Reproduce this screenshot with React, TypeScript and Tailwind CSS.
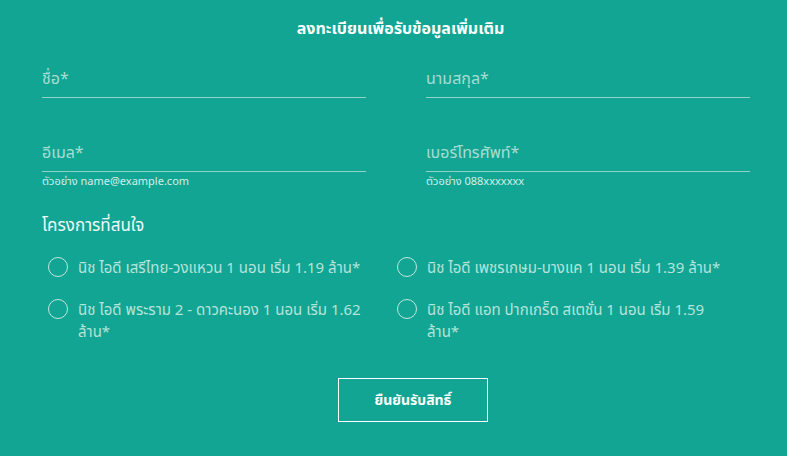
const projects = [
  "นิช ไอดี เสรีไทย-วงแหวน 1 นอน เริ่ม 1.19 ล้าน*",
  "นิช ไอดี เพชรเกษม-บางแค 1 นอน เริ่ม 1.39 ล้าน*",
  "นิช ไอดี พระราม 2 - ดาวคะนอง 1 นอน เริ่ม 1.62 ล้าน*",
  "นิช ไอดี แอท ปากเกร็ด สเตชั่น 1 นอน เริ่ม 1.59 ล้าน*",
];

const Field = ({ label, hint }: { label: string; hint?: string }) => (
  <div className="flex flex-col">
    <div className="h-[39px] border-b border-[#8fd3c6] text-[16px] text-[#a6ddd2] pt-[7px]">
      {label}
    </div>
    <div className="h-[18px] text-[11px] leading-[18px] text-[#d2efe9]">{hint}</div>
  </div>
);

export default function App() {
  return (
    <div
      className="w-[787px] h-[456px] bg-[#13a593] text-white overflow-hidden"
      style={{ fontFamily: '"Noto Sans", "Noto Sans Thai", sans-serif' }}
    >
      <div className="pt-[16px] pl-[14px] text-center text-[16px] font-bold">
        ลงทะเบียนเพื่อรับข้อมูลเพิ่มเติม
      </div>
      <div className="pl-[42px] pr-[37px] pt-[19px]">
        <div className="grid grid-cols-2 gap-x-[60px] gap-y-[17px]">
          <Field label="ชื่อ*" />
          <Field label="นามสกุล*" />
          <Field label="อีเมล*" hint="ตัวอย่าง name@example.com" />
          <Field label="เบอร์โทรศัพท์*" hint="ตัวอย่าง 088xxxxxxx" />
        </div>
        <div className="mt-[22px] text-[17px] text-[#eefaf7]">โครงการที่สนใจ</div>
        <div className="mt-[18px] grid grid-cols-[317px_330px] gap-x-[32px] gap-y-[20px] pl-[6px]">
          {projects.map((p) => (
            <label key={p} className="flex items-start gap-[10px] text-[15px] leading-[22px] text-[#b4e4da]">
              <span className="mt-[1px] w-[20px] h-[20px] shrink-0 rounded-full border border-[#bfe8df]" />
              <span>{p}</span>
            </label>
          ))}
        </div>
        <div className="mt-[36px] flex">
          <button className="ml-[296px] w-[150px] h-[44px] border border-white text-[14px] font-bold text-white">
            ยืนยันรับสิทธิ์
          </button>
        </div>
      </div>
    </div>
  );
}
